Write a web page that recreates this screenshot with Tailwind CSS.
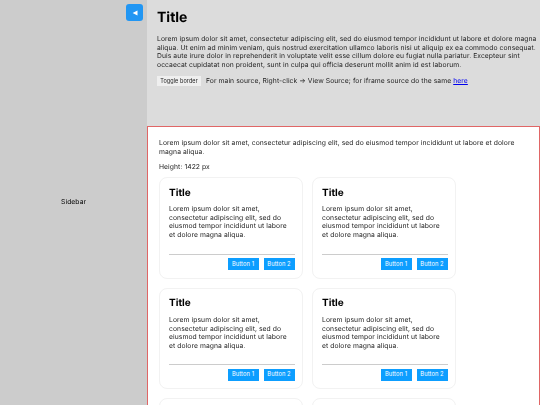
<!DOCTYPE html>
<html lang="en">
<head>
  <meta charset="UTF-8">
  <title>Sidebar layout</title>
  <script src="https://cdn.jsdelivr.net/npm/@tailwindcss/browser@4"></script>
</head>
<body class="h-[405px] overflow-hidden [font-family:Inter,sans-serif] [text-rendering:geometricPrecision] text-[#222] tracking-[0.08px]">
  <div class="flex h-[405px] overflow-hidden">

    <!-- Sidebar -->
    <aside class="relative w-[147px] shrink-0 bg-[#cccccc] flex items-center justify-center text-[6.75px] text-black">
      <span class="will-change-transform">Sidebar</span>
      <button class="absolute top-[4px] right-[4px] w-[17px] h-[17px] rounded-[3px] bg-[#2196f3] flex items-center justify-center">
        <svg width="6" height="6" viewBox="0 0 6 6"><path d="M5.5 .4V5.6L.6 3Z" fill="#fff"/></svg>
      </button>
    </aside>

    <main class="flex-1 min-w-0 overflow-hidden bg-[#dcdcdc]">
      <!-- Header -->
      <div class="h-[126px] pl-[9.5px] pr-[3px] pt-[10px]">
        <h1 class="text-[14px] leading-[16px] font-bold text-black tracking-normal will-change-transform">Title</h1>
        <p class="mt-[9px] text-[6.75px] leading-[8.5px] will-change-transform">Lorem ipsum dolor sit amet, consectetur adipiscing elit, sed do eiusmod tempor incididunt ut labore et dolore magna aliqua. Ut enim ad minim veniam, quis nostrud exercitation ullamco laboris nisi ut aliquip ex ea commodo consequat. Duis aute irure dolor in reprehenderit in voluptate velit esse cillum dolore eu fugiat nulla pariatur. Excepteur sint occaecat cupidatat non proident, sunt in culpa qui officia deserunt mollit anim id est laborum.</p>
        <div class="mt-[7px] flex items-center gap-[5px] text-[6.75px]">
          <button class="w-[44px] h-[10px] bg-[#efefef] text-[5.5px] leading-[10px] text-[#222]"><span class="block will-change-transform">Toggle border</span></button>
          <span class="will-change-transform">For main source, Right-click → View Source; for iframe source do the same <a href="#" class="text-[#0000ee] underline">here</a></span>
        </div>
      </div>

      <!-- Content -->
      <div class="h-[300px] bg-white border-[1.5px] border-[#e06666] pl-[11px] pt-[12px] pr-[8px]">
        <p class="text-[6.75px] leading-[8.5px] will-change-transform">Lorem ipsum dolor sit amet, consectetur adipiscing elit, sed do eiusmod tempor incididunt ut labore et dolore magna aliqua.</p>
        <p class="mt-[7px] text-[6.75px] leading-[8.5px] will-change-transform">Height: 1422 px</p>

        <div class="mt-[5.5px] grid grid-cols-[144px_144px] gap-[9px]">
          <div class="h-[101.5px] rounded-[8px] border border-[#f2f2f2] pl-[9px] pr-[7.5px] pt-[8.5px] flex flex-col">
            <h2 class="text-[10px] leading-[12px] font-bold text-black tracking-normal will-change-transform">Title</h2>
            <p class="mt-[6.5px] max-w-[122px] text-[6.75px] leading-[8.5px] will-change-transform">Lorem ipsum dolor sit amet, consectetur adipiscing elit, sed do eiusmod tempor incididunt ut labore et dolore magna aliqua.</p>
            <div class="mt-auto mb-[7.5px] border-t border-[#cccccc] pt-[3.5px] flex justify-end gap-[5px]">
              <button class="w-[31px] h-[12px] bg-[#0d9eff] text-white text-[5.75px]">Button 1</button>
              <button class="w-[31px] h-[12px] bg-[#0d9eff] text-white text-[5.75px]">Button 2</button>
            </div>
          </div>
          <div class="h-[101.5px] rounded-[8px] border border-[#f2f2f2] pl-[9px] pr-[7.5px] pt-[8.5px] flex flex-col">
            <h2 class="text-[10px] leading-[12px] font-bold text-black tracking-normal will-change-transform">Title</h2>
            <p class="mt-[6.5px] max-w-[122px] text-[6.75px] leading-[8.5px] will-change-transform">Lorem ipsum dolor sit amet, consectetur adipiscing elit, sed do eiusmod tempor incididunt ut labore et dolore magna aliqua.</p>
            <div class="mt-auto mb-[7.5px] border-t border-[#cccccc] pt-[3.5px] flex justify-end gap-[5px]">
              <button class="w-[31px] h-[12px] bg-[#0d9eff] text-white text-[5.75px]">Button 1</button>
              <button class="w-[31px] h-[12px] bg-[#0d9eff] text-white text-[5.75px]">Button 2</button>
            </div>
          </div>
          <div class="h-[101.5px] rounded-[8px] border border-[#f2f2f2] pl-[9px] pr-[7.5px] pt-[8.5px] flex flex-col">
            <h2 class="text-[10px] leading-[12px] font-bold text-black tracking-normal will-change-transform">Title</h2>
            <p class="mt-[6.5px] max-w-[122px] text-[6.75px] leading-[8.5px] will-change-transform">Lorem ipsum dolor sit amet, consectetur adipiscing elit, sed do eiusmod tempor incididunt ut labore et dolore magna aliqua.</p>
            <div class="mt-auto mb-[7.5px] border-t border-[#cccccc] pt-[3.5px] flex justify-end gap-[5px]">
              <button class="w-[31px] h-[12px] bg-[#0d9eff] text-white text-[5.75px]">Button 1</button>
              <button class="w-[31px] h-[12px] bg-[#0d9eff] text-white text-[5.75px]">Button 2</button>
            </div>
          </div>
          <div class="h-[101.5px] rounded-[8px] border border-[#f2f2f2] pl-[9px] pr-[7.5px] pt-[8.5px] flex flex-col">
            <h2 class="text-[10px] leading-[12px] font-bold text-black tracking-normal will-change-transform">Title</h2>
            <p class="mt-[6.5px] max-w-[122px] text-[6.75px] leading-[8.5px] will-change-transform">Lorem ipsum dolor sit amet, consectetur adipiscing elit, sed do eiusmod tempor incididunt ut labore et dolore magna aliqua.</p>
            <div class="mt-auto mb-[7.5px] border-t border-[#cccccc] pt-[3.5px] flex justify-end gap-[5px]">
              <button class="w-[31px] h-[12px] bg-[#0d9eff] text-white text-[5.75px]">Button 1</button>
              <button class="w-[31px] h-[12px] bg-[#0d9eff] text-white text-[5.75px]">Button 2</button>
            </div>
          </div>
          <div class="h-[101.5px] rounded-[8px] border border-[#f2f2f2]"></div>
          <div class="h-[101.5px] rounded-[8px] border border-[#f2f2f2]"></div>
        </div>
      </div>
    </main>
  </div>
</body>
</html>
